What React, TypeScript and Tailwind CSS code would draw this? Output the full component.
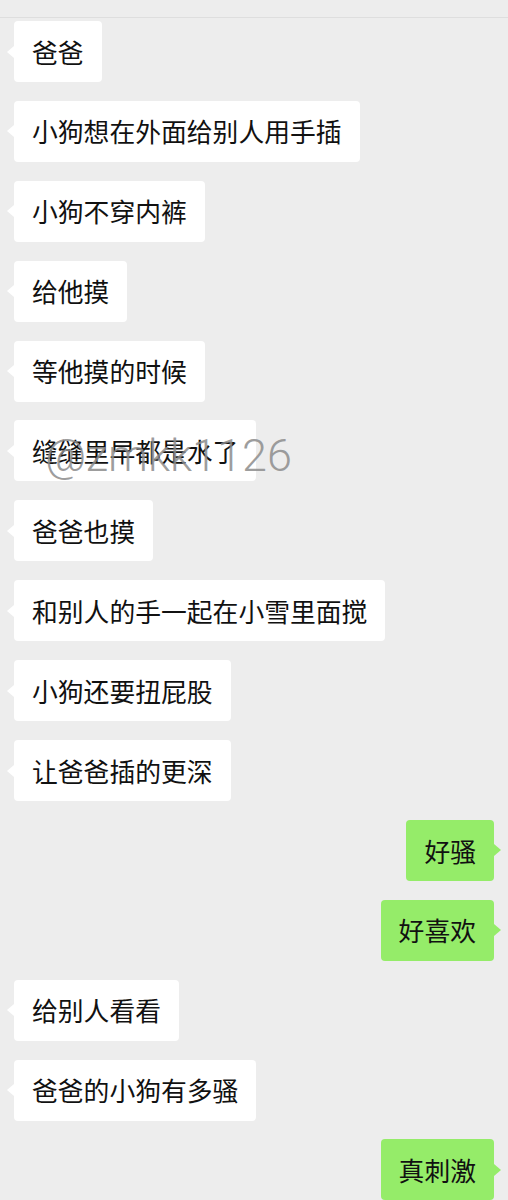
const messages: { text: string; me?: boolean }[] = [
  { text: "爸爸" },
  { text: "小狗想在外面给别人用手插" },
  { text: "小狗不穿内裤" },
  { text: "给他摸" },
  { text: "等他摸的时候" },
  { text: "缝缝里早都是水了" },
  { text: "爸爸也摸" },
  { text: "和别人的手一起在小雪里面搅" },
  { text: "小狗还要扭屁股" },
  { text: "让爸爸插的更深" },
  { text: "好骚", me: true },
  { text: "好喜欢", me: true },
  { text: "给别人看看" },
  { text: "爸爸的小狗有多骚" },
  { text: "真刺激", me: true },
];

function Bubble({ text, me }: { text: string; me?: boolean }) {
  return (
    <div className={me ? "flex justify-end px-[14px]" : "flex justify-start px-[14px]"}>
      <div
        className={
          me
            ? "relative h-[61px] flex items-center px-[18px] rounded-[4px] bg-[#95ec69]"
            : "relative h-[61px] flex items-center px-[18px] rounded-[4px] bg-white"
        }
      >
        {me ? (
          <span className="absolute right-[-7px] top-1/2 -translate-y-1/2 w-0 h-0 border-y-[6px] border-y-transparent border-l-[7px] border-l-[#95ec69]" />
        ) : (
          <span className="absolute left-[-7px] top-1/2 -translate-y-1/2 w-0 h-0 border-y-[6px] border-y-transparent border-r-[7px] border-r-white" />
        )}
        <span className="text-[25.8px] leading-none text-[#111111] whitespace-nowrap">{text}</span>
      </div>
    </div>
  );
}

export default function App() {
  return (
    <div
      className="relative w-[508px] h-[1200px] overflow-hidden bg-[#ededed]"
      style={{ fontFamily: '"Noto Sans CJK SC", "Noto Sans", sans-serif' }}
    >
      <div className="h-[17px]" />
      <div className="border-t border-[#dedede] pt-[3px] flex flex-col gap-[18.9px]">
        {messages.map((m, i) => (
          <Bubble key={i} text={m.text} me={m.me} />
        ))}
      </div>
      {/* watermark */}
      <div
        className="absolute left-[45px] top-[433px] text-[45px] leading-none text-[#8c8c8c]/85 font-light pointer-events-none"
        style={{ fontFamily: "Roboto, sans-serif" }}
      >
        @zmkk1126
      </div>
    </div>
  );
}
